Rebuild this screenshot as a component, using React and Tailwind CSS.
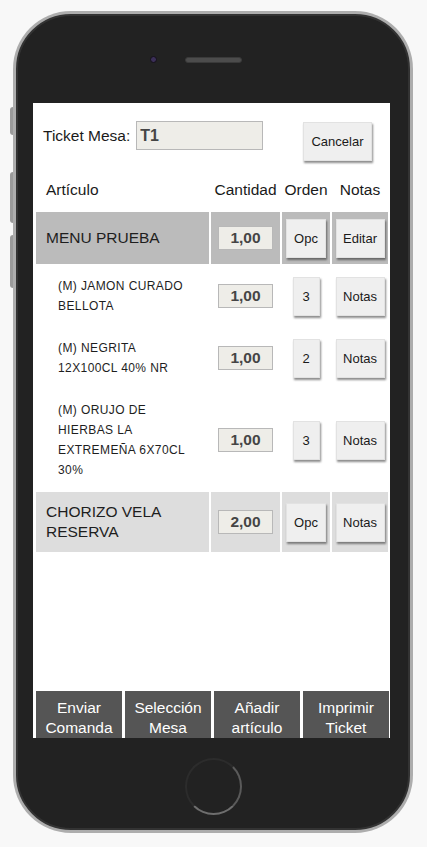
import { useState } from "react";

const rows = [
  { name: "MENU PRUEBA", qty: "1,00", orden: "Opc", nota: "Editar", kind: "main", bg: "bg-[#bbbbbb]", h: "h-[52px]" },
  { name: "(M) JAMON CURADO BELLOTA", qty: "1,00", orden: "3", nota: "Notas", kind: "sub", bg: "bg-white", h: "h-[60px]" },
  { name: "(M) NEGRITA 12X100CL 40% NR", qty: "1,00", orden: "2", nota: "Notas", kind: "sub", bg: "bg-white", h: "h-[60px]" },
  { name: "(M) ORUJO DE HIERBAS LA EXTREMEÑA 6X70CL 30%", qty: "1,00", orden: "3", nota: "Notas", kind: "sub", bg: "bg-white", h: "h-[100px]" },
  { name: "CHORIZO VELA RESERVA", qty: "2,00", orden: "Opc", nota: "Notas", kind: "main", bg: "bg-[#dddddd]", h: "h-[60px]" },
];

const actions = [
  ["Enviar", "Comanda"],
  ["Selección", "Mesa"],
  ["Añadir", "artículo"],
  ["Imprimir", "Ticket"],
];

const btn =
  "bg-[#efefef] border border-[#e2e2e2] shadow-[1px_2px_2px_rgba(0,0,0,0.45)] text-[13px] text-[#1a1a1a] leading-none";

const cols = "grid grid-cols-[173px_69px_48px_56px] gap-x-[2px]";

function Row({ row }) {
  const isMain = row.kind === "main";
  return (
    <div className={`${cols} ${row.h}`}>
      <div
        className={`${row.bg} flex items-center ${
          isMain
            ? "pl-[10px] pr-[8px] text-[15.5px] leading-[20px]"
            : "pl-[22px] pr-[11px] text-[12px] leading-[20px] tracking-[0.4px]"
        } text-[#1e1e1e]`}
      >
        {row.name}
      </div>
      <div className={`${row.bg} flex items-center justify-center`}>
        <input
          readOnly
          defaultValue={row.qty}
          className="w-[55px] h-[24px] bg-[#eeede8] border border-[#b8b8b8] text-center font-bold text-[15.5px] text-[#454545] outline-none"
        />
      </div>
      <div className={`${row.bg} flex items-center justify-center`}>
        <button className={`${btn} ${row.orden === "Opc" ? "w-[40px]" : "w-[27px]"} h-[39px]`}>
          {row.orden}
        </button>
      </div>
      <div className={`${row.bg} flex items-center justify-center`}>
        <button className={`${btn} w-[49px] h-[39px]`}>{row.nota}</button>
      </div>
    </div>
  );
}

export default function App() {
  const [mesa] = useState("T1");

  return (
    <div className="min-h-screen bg-[#f8f8f8] pt-[11px] pl-[13px] font-['Liberation_Sans',Arial,sans-serif]">
      <div className="relative w-[400px] h-[822px] rounded-[58px] bg-[#adadad] p-[3px]">
        {/* side buttons */}
        <div className="absolute left-[-3px] top-[96px] w-[3px] h-[28px] bg-[#9a9a9a] rounded-l-sm" />
        <div className="absolute left-[-3px] top-[161px] w-[3px] h-[51px] bg-[#9a9a9a] rounded-l-sm" />
        <div className="absolute left-[-3px] top-[224px] w-[3px] h-[53px] bg-[#9a9a9a] rounded-l-sm" />

        <div className="h-full rounded-[55px] bg-[#222222] border-2 border-[#333333] flex flex-col items-center">
          <div className="h-[87px] w-full flex items-center justify-center">
            <div className="w-[7px] h-[7px] rounded-full bg-[#3b2f58] border border-[#141018]" />
            <div className="w-[28px]" />
            <div className="w-[57px] h-[6px] rounded-full bg-[#4c4c4c] border border-[#3a3a3a]" />
            <div className="w-[34px]" />
          </div>

          <div className="self-start ml-[15px] w-[357px] h-[635px] bg-white overflow-hidden flex flex-col text-[#1a1a1a]">
            <div className="flex items-start pl-[10px] pr-[18px] pt-[18px]">
              <div className="flex items-center h-[29px] gap-[6px]">
                <span className="text-[15.5px]">Ticket Mesa:</span>
                <input
                  readOnly
                  defaultValue={mesa}
                  className="w-[127px] h-[29px] bg-[#eeede8] border border-[#b8b8b8] pl-[3px] font-bold text-[16px] text-[#454545] outline-none"
                />
              </div>
              <button className={`${btn} ml-auto mt-[1px] w-[69px] h-[39px]`}>Cancelar</button>
            </div>

            <div className="mt-[9px] px-[3px] flex flex-col gap-y-[2px]">
              <div className={`${cols} h-[40px] text-[15.5px] items-center`}>
                <div className="pl-[10px]">Artículo</div>
                <div className="text-center">Cantidad</div>
                <div className="text-center">Orden</div>
                <div className="text-center">Notas</div>
              </div>
              {rows.map((row) => (
                <Row key={row.name} row={row} />
              ))}
            </div>

            <div className="mt-auto grid grid-cols-4 gap-x-[3px] pl-[3px] pr-[1px]">
              {actions.map(([a, b]) => (
                <button
                  key={a}
                  className="h-[47px] bg-[#555555] text-white text-[15.5px] leading-[20px] pt-[7px] flex flex-col items-center justify-start"
                >
                  <span>{a}</span>
                  <span>{b}</span>
                </button>
              ))}
            </div>
          </div>

          <div className="mt-[20px] w-[57px] h-[57px] rounded-full border-2 border-[#2c2c2c] border-b-[#6e6e6e] border-r-[#5a5a5a]" />
        </div>
      </div>
    </div>
  );
}
